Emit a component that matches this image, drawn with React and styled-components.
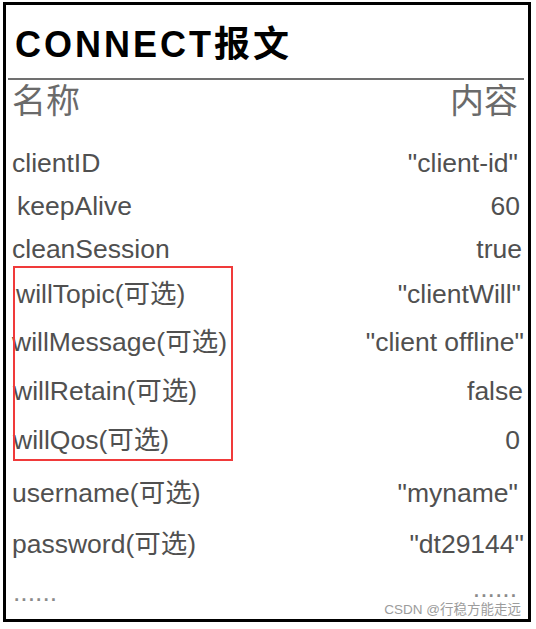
import React from 'react';
import styled, {createGlobalStyle} from 'styled-components';

const GlobalStyle = createGlobalStyle`
  html, body {
    margin: 0;
    padding: 0;
    background: #fff;
  }
  body {
    font-family: "Liberation Sans", "Noto Sans CJK SC", sans-serif;
  }
`

const Frame = styled.div`
  box-sizing: border-box;
  width: 528px;
  height: 620px;
  margin: 2px 0 0 3px;
  border: 3px solid #000;
  display: flex;
  flex-direction: column;
  background: #fff;
`

const Title = styled.h1`
  margin: 20px 0 0;
  padding-left: 9px;
  font-size: 36px;
  line-height: 40px;
  font-weight: bold;
  letter-spacing: 3px;
  color: #000;
`

const Divider = styled.div`
  height: 2px;
  margin: 13px 4px 0 2px;
  background: #707070;
`

const HeadRow = styled.div`
  display: flex;
  justify-content: space-between;
  margin-top: 3px;
  padding: 0 10px 0 6px;
  font-size: 34px;
  line-height: 36px;
  color: #6a6a6a;
`

const Row = styled.div`
  display: flex;
  justify-content: space-between;
  align-items: flex-start;
  margin-top: ${p => p.$space}px;
  padding-left: ${p => 6 + (p.$indent || 0)}px;
  padding-right: ${p => p.$pr ?? 8}px;
  font-size: 26.5px;
  line-height: 28px;
  color: #505050;
  white-space: nowrap;
`

const Dots = styled(Row)`
  color: #8a8a8a;
`

const RaisedDots = styled.span`
  margin-top: -4px;
`

const OptionalGroup = styled.div`
  position: relative;
  margin-top: ${p => p.$space}px;

  &::after {
    content: '';
    position: absolute;
    left: 7px;
    top: -14px;
    width: 220px;
    bottom: -7px;
    box-sizing: border-box;
    border: 2px solid #f03a3a;
    pointer-events: none;
  }
`

const Watermark = styled.div`
  margin-top: -4px;
  padding-right: 7px;
  text-align: right;
  font-size: 13.5px;
  line-height: 16px;
  color: #9c9c9c;
`

const fields = [
  {name: 'clientID', value: '"client-id"', space: 30, pr: 10},
  {name: 'keepAlive', value: '60', space: 15, indent: 5, pr: 8},
  {name: 'cleanSession', value: 'true', space: 15, pr: 6},
];

const optional = [
  {name: 'willTopic(可选)', value: '"clientWill"', space: 0, indent: 4, pr: 7},
  {name: 'willMessage(可选)', value: '"client offline"', space: 20, pr: 4},
  {name: 'willRetain(可选)', value: 'false', space: 21, indent: 1, pr: 5},
  {name: 'willQos(可选)', value: '0', space: 21, indent: 1, pr: 8},
];

const rest = [
  {name: 'username(可选)', value: '"myname"', space: 25, pr: 10},
  {name: 'password(可选)', value: '"dt29144"', space: 23, pr: 4},
];

const Field = ({f}) => (
  <Row $space={f.space} $indent={f.indent} $pr={f.pr}>
    <span>{f.name}</span>
    <span>{f.value}</span>
  </Row>
);

const App = () => {
  return (
    <>
      <GlobalStyle/>
      <Frame>
        <Title>CONNECT报文</Title>
        <Divider/>
        <HeadRow>
          <span>名称</span>
          <span>内容</span>
        </HeadRow>
        {fields.map(f => <Field key={f.name} f={f}/>)}
        <OptionalGroup $space={17}>
          {optional.map(f => <Field key={f.name} f={f}/>)}
        </OptionalGroup>
        {rest.map(f => <Field key={f.name} f={f}/>)}
        <Dots $space={20} $indent={1} $pr={11}>
          <span>......</span>
          <RaisedDots>......</RaisedDots>
        </Dots>
        <Watermark>CSDN @行稳方能走远</Watermark>
      </Frame>
    </>
  );
};
export default App;
